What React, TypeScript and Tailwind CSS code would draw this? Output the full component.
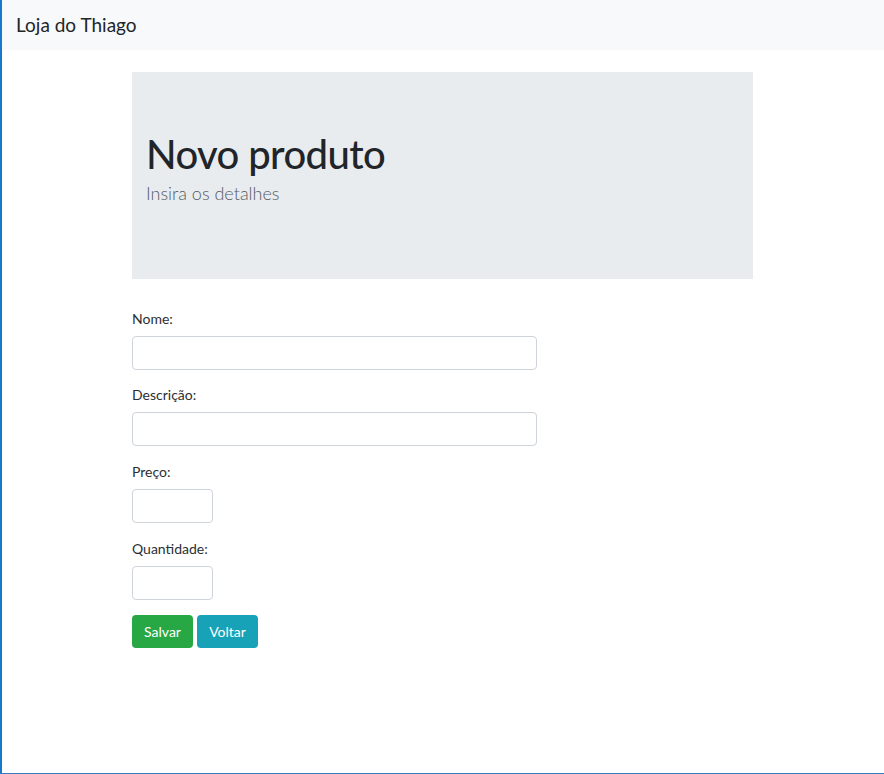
export default function App() {
  const fields = [
    { label: "Nome:", width: "w-[405px]", gap: "mb-[13px]" },
    { label: "Descrição:", width: "w-[405px]", gap: "mb-[14px]" },
    { label: "Preço:", width: "w-[81px]", gap: "mb-[14px]" },
    { label: "Quantidade:", width: "w-[81px]", gap: "mb-[15px]" },
  ];

  return (
    <div
      className="h-[774px] w-[884px] border-l-2 border-b border-l-[#1a78c8] border-b-[#3d7ab8] bg-white text-[#212529] overflow-hidden"
      style={{ fontFamily: '"Segoe UI", Lato, sans-serif' }}
    >
      <nav className="h-[50px] bg-[#f8f9fa] flex items-center pl-[14px]">
        <span className="text-[19px] leading-[30px]">Loja do Thiago</span>
      </nav>

      <div className="pl-[130px] pt-[22px]">
        <div className="w-[621px] h-[207px] bg-[#e9ecef] px-[14px] pt-[58px]">
          <h1 className="text-[40px] leading-[48px] font-medium tracking-[-0.6px]">
            Novo produto
          </h1>
          <p className="text-[18px] leading-[26px] font-light text-[#555b61] mt-[2px]">
            Insira os detalhes
          </p>
        </div>

        <form className="mt-[28px]">
          {fields.map((f) => (
            <div key={f.label} className={f.gap}>
              <label className="block text-[14px] leading-[21px] mb-2 pt-[1px] h-[21px] text-[#2b2f33]">
                {f.label}
              </label>
              <input
                type="text"
                className={`${f.width} h-[34px] block border border-[#ced4da] rounded bg-white outline-none`}
              />
            </div>
          ))}
          <div className="flex gap-1">
            <button
              type="button"
              className="w-[61px] h-[33px] rounded bg-[#28a745] text-white text-[14px]"
            >
              Salvar
            </button>
            <button
              type="button"
              className="w-[61px] h-[33px] rounded bg-[#17a2b8] text-white text-[14px]"
            >
              Voltar
            </button>
          </div>
        </form>
      </div>
    </div>
  );
}
